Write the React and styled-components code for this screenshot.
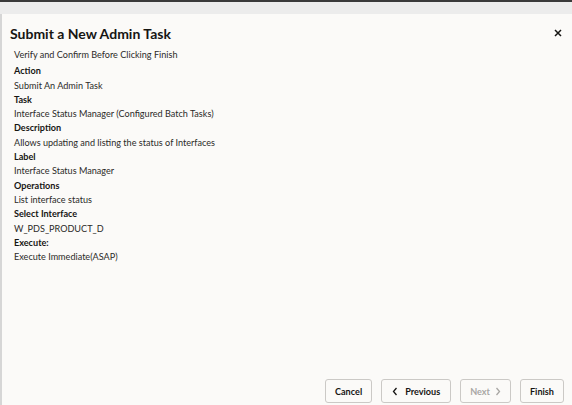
import React from 'react'
import styled, { createGlobalStyle } from 'styled-components'

const Global = createGlobalStyle`
  html, body { margin: 0; padding: 0; background: #fbfaf8; }
  body { font-family: Lato, "Liberation Sans", sans-serif; color: #161513; }
`

const Frame = styled.div`
  height: 405px;
  display: flex;
  flex-direction: column;
  box-sizing: border-box;
`

const TopStrip = styled.div`
  height: 12px;
  border-top: 2px solid #3a3a3a;
  background: #ececec;
`

const Dialog = styled.div`
  flex: 1;
  display: flex;
  flex-direction: column;
  border-left: 2px solid #d6d6d6;
  background: #fbfaf8;
`

const Header = styled.div`
  display: flex;
  align-items: center;
  justify-content: space-between;
  padding: 8px 8px 0 8px;
  height: 22px;
`

const Title = styled.h1`
  margin: 0;
  font-size: 14px;
  font-weight: 700;
  color: #161513;
`

const Close = styled.button`
  border: 0;
  background: none;
  padding: 0;
  width: 12px;
  height: 12px;
  display: flex;
  align-items: center;
  justify-content: center;
  cursor: pointer;
`

const Body = styled.div`
  padding: 4px 12px 0;
  font-size: 9.1px;
  line-height: 14.3px;
`

const Intro = styled.div`
  margin-bottom: 2px;
  color: #2b2a28;
`

const Label = styled.div`
  font-weight: 700;
`

const Value = styled.div`
  color: #2b2a28;
`

const Footer = styled.div`
  margin-top: auto;
  display: flex;
  justify-content: flex-end;
  gap: 9px;
  padding: 0 8px 2px 0;
`

const Button = styled.button`
  height: 24px;
  box-sizing: border-box;
  padding: 0 ${p => p.$pad || 9}px;
  border: 1px solid #cbc9c6;
  border-radius: 3px;
  background: #fbfaf8;
  font-family: Lato, "Liberation Sans", sans-serif;
  font-size: 9.1px;
  font-weight: 700;
  color: ${p => (p.disabled ? '#a9a7a4' : '#161513')};
  display: flex;
  align-items: center;
  gap: ${p => p.$gap || 7}px;
`

const Chevron = ({ dir }) => (
  <svg width="6" height="9" viewBox="0 0 6 9">
    <path
      d={dir === 'left' ? 'M4.5 1 L1.5 4.5 L4.5 8' : 'M1.5 1 L4.5 4.5 L1.5 8'}
      fill="none"
      stroke="currentColor"
      strokeWidth="1.3"
    />
  </svg>
)

const fields = [
  ['Action', 'Submit An Admin Task'],
  ['Task', 'Interface Status Manager (Configured Batch Tasks)'],
  ['Description', 'Allows updating and listing the status of Interfaces'],
  ['Label', 'Interface Status Manager'],
  ['Operations', 'List interface status'],
  ['Select Interface', 'W_PDS_PRODUCT_D'],
  ['Execute:', 'Execute Immediate(ASAP)'],
]

export default function App() {
  return (
    <Frame>
      <Global />
      <TopStrip />
      <Dialog>
        <Header>
          <Title>Submit a New Admin Task</Title>
          <Close aria-label="Close">
            <svg width="8" height="8" viewBox="0 0 8 8">
              <path d="M1 1 L7 7 M7 1 L1 7" stroke="#161513" strokeWidth="1.5" />
            </svg>
          </Close>
        </Header>
        <Body>
          <Intro>Verify and Confirm Before Clicking Finish</Intro>
          {fields.map(([label, value]) => (
            <React.Fragment key={label}>
              <Label>{label}</Label>
              <Value>{value}</Value>
            </React.Fragment>
          ))}
        </Body>
        <Footer>
          <Button>Cancel</Button>
          <Button $pad={10}><Chevron dir="left" />Previous</Button>
          <Button disabled $gap={5}>Next<Chevron dir="right" /></Button>
          <Button>Finish</Button>
        </Footer>
      </Dialog>
    </Frame>
  )
}
